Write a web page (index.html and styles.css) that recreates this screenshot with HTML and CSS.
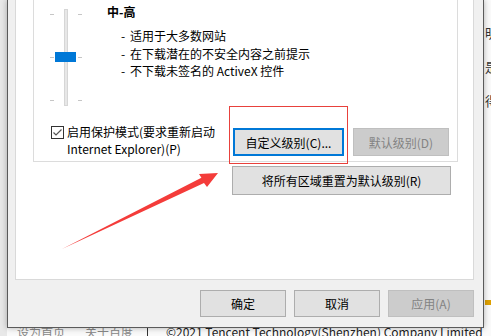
FILE: index.html
```html
<!DOCTYPE html>
<html lang="zh-CN">

<head>
  <meta charset="UTF-8">
  <meta name="viewport" content="width=device-width, initial-scale=1.0">
  <title>Internet 选项 - 安全</title>
  <link rel="stylesheet" href="styles.css">
</head>

<body>
  <!-- 背后的网页 -->
  <div class="page">
    <div class="page-gutter"></div>
    <div class="page-main">
      <div class="page-side">
        <p>明白了更多内容</p>
        <p>是否继续访问</p>
        <p>得到帮助</p>
        <div class="page-bar"></div>
      </div>
      <div class="page-footer">
        <span class="footer-link">设为首页</span>
        <span class="footer-link">关于百度</span>
        <span class="footer-sep"></span>
        <span class="footer-copy">©2021 Tencent Technology(Shenzhen) Company Limited</span>
      </div>
    </div>
  </div>

  <!-- Internet 选项对话框 -->
  <div class="dialog">
    <div class="tab-panel">
      <div class="security-group">
        <div class="level-top">
          <svg class="slider" width="40" height="110" viewBox="0 0 40 110">
            <rect x="17.5" y="9.5" width="3" height="96" fill="#e7e7e7" stroke="#d6d6d6" />
            <g stroke="#c6c6c6" stroke-width="1">
              <line x1="3" y1="14.5" x2="7" y2="14.5" />
              <line x1="3" y1="57.5" x2="7" y2="57.5" />
              <line x1="3" y1="100.5" x2="7" y2="100.5" />
              <line x1="31" y1="14.5" x2="35" y2="14.5" />
              <line x1="31" y1="57.5" x2="35" y2="57.5" />
              <line x1="31" y1="100.5" x2="35" y2="100.5" />
            </g>
            <rect x="8" y="52" width="21" height="10" fill="#0078d7" />
          </svg>
          <div class="level-text">
            <div class="level-title">中-高</div>
            <ul class="level-list">
              <li><span class="dash">-</span>适用于大多数网站</li>
              <li><span class="dash">-</span>在下载潜在的不安全内容之前提示</li>
              <li><span class="dash">-</span>不下载未签名的 ActiveX 控件</li>
            </ul>
          </div>
        </div>
        <div class="level-bottom">
          <label class="protect">
            <svg class="checkbox" width="13" height="13" viewBox="0 0 13 13">
              <rect x="0.5" y="0.5" width="12" height="12" fill="#fff" stroke="#333" />
              <polyline points="2.5,6.5 5,9 10.5,3.5" fill="none" stroke="#555" stroke-width="1.2" />
            </svg>
            <span class="protect-text">启用保护模式(要求重新启动<br>Internet Explorer)(P)</span>
          </label>
          <button class="btn btn-custom">自定义级别(C)...</button>
          <button class="btn btn-level" disabled>默认级别(D)</button>
        </div>
      </div>
      <button class="btn btn-reset">将所有区域重置为默认级别(R)</button>
    </div>

    <div class="dialog-actions">
      <button class="btn btn-action">确定</button>
      <button class="btn btn-action">取消</button>
      <button class="btn btn-action" disabled>应用(A)</button>
    </div>
  </div>

  <!-- 标注 -->
  <svg class="annotation" width="491" height="336" viewBox="0 0 491 336">
    <rect x="229.5" y="106.5" width="118" height="57" fill="none" stroke="#e8413c" />
    <path d="M62 249 L201.4 177.7 L199 174 L218 173 L207 187 L204 183.1 Z" fill="#f43c3a" />
  </svg>
</body>

</html>
```

FILE: styles.css
```css
body {
  margin: 0;
  width: 491px;
  height: 336px;
  overflow: hidden;
  position: relative;
  font-family: "Noto Sans CJK SC", "Noto Sans", sans-serif;
  font-size: 12px;
  color: #000;
  background-color: #fff;
}

/* 背后的网页 */
.page {
  display: grid;
  grid-template-columns: 7px 1fr;
  height: 336px;
}

.page-gutter {
  background-color: #e8e8e8;
}

.page-main {
  display: flex;
  flex-direction: column;
  justify-content: space-between;
  background-color: #fafafa;
}

.page-side {
  margin-left: 478px;
  white-space: nowrap;
  padding-top: 16px;
  font-size: 13px;
  line-height: 34px;
  color: #333;
}

.page-side p {
  margin: 0;
}

.page-bar {
  margin-top: 182px;
  height: 5px;
  background-color: #dea000;
}

.page-footer {
  display: flex;
  align-items: center;
  height: 16px;
  margin-bottom: -4px;
  padding-left: 10px;
  font-size: 12px;
  line-height: 16px;
  white-space: nowrap;
}

.footer-link {
  color: #888;
  margin-right: 20px;
}

.footer-sep {
  width: 1px;
  height: 16px;
  background-color: #333;
  margin: 0 18px 0 -6px;
}

.footer-copy {
  color: #222;
}

/* 对话框 */
.dialog {
  position: absolute;
  left: 7px;
  top: 0;
  width: 477px;
  height: 328px;
  box-sizing: border-box;
  display: flex;
  flex-direction: column;
  padding: 0 9px 10px 7px;
  background-color: #f0f0f0;
  border: 1px solid #5a5a5a;
  border-top: none;
  box-shadow: 0 0 6px rgba(0, 0, 0, 0.3);
}

.tab-panel {
  height: 280px;
  box-sizing: border-box;
  padding: 0 15px 0 17px;
  background-color: #fff;
  border: 1px solid #d9d9d9;
  border-top: none;
}

.security-group {
  height: 162px;
  box-sizing: border-box;
  display: flex;
  flex-direction: column;
  border: 1px solid #dcdcdc;
  border-top: none;
}

.level-top {
  display: flex;
  height: 118px;
}

.slider {
  flex: none;
  margin-left: 13px;
}

.level-text {
  margin-left: 20px;
  padding-top: 3px;
}

.level-title {
  font-weight: bold;
  line-height: 18px;
}

.level-list {
  list-style: none;
  margin: 6px 0 0;
  padding-left: 14px;
  line-height: 17.5px;
}

.level-list li {
  display: flex;
}

.dash {
  width: 9px;
}

.level-bottom {
  display: flex;
  align-items: flex-start;
  padding: 5px 0 0 17px;
}

.protect {
  display: flex;
  width: 182px;
}

.checkbox {
  flex: none;
  margin: 3px 3px 0 0;
}

.protect-text {
  line-height: 17px;
}

/* 按钮 */
.btn {
  height: 28px;
  box-sizing: border-box;
  padding: 0;
  font-family: inherit;
  font-size: 12px;
  color: #000;
  background-color: #e1e1e1;
  border: 1px solid #adadad;
}

.btn:disabled {
  color: #838383;
  background-color: #cccccc;
  border-color: #bfbfbf;
}

.btn-custom {
  width: 111px;
  margin-top: 5px;
  border: 2px solid #0078d7;
}

.btn-level {
  width: 96px;
  margin: 5px 0 0 9px;
}

.btn-reset {
  display: block;
  width: 219px;
  height: 29px;
  margin: 4px 0 0 199px;
}

.dialog-actions {
  display: flex;
  justify-content: flex-end;
  gap: 8px;
  margin-top: 10px;
}

.btn-action {
  width: 86px;
  height: 27px;
}

/* 标注层 */
.annotation {
  position: absolute;
  left: 0;
  top: 0;
  pointer-events: none;
}
```
